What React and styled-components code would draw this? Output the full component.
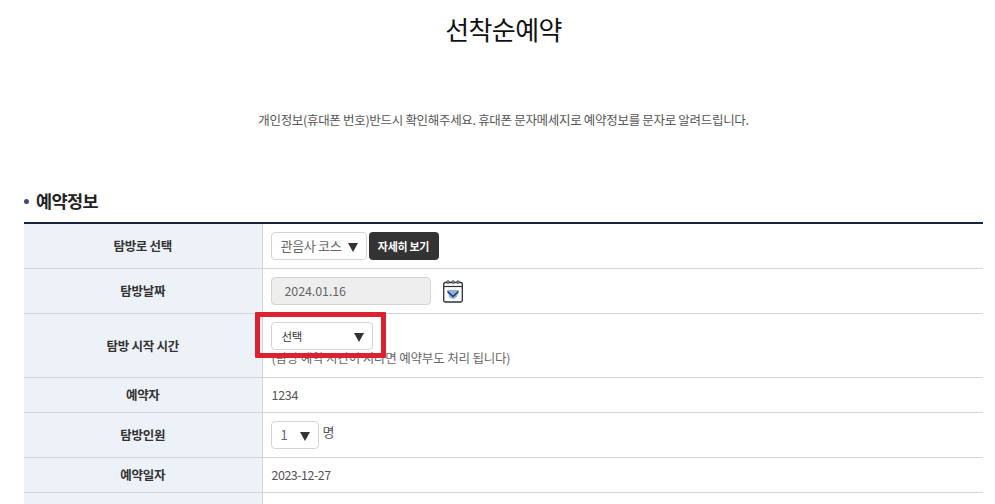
import React from "react";
import styled, { createGlobalStyle } from "styled-components";

const GlobalStyle = createGlobalStyle`
  html, body {
    margin: 0;
    height: 504px;
    overflow: hidden;
    background: #fff;
    font-family: "Noto Sans CJK KR", "Noto Sans", sans-serif;
  }
`;

const Page = styled.div`
  width: 995px;
  box-sizing: border-box;
  padding: 0 12px 0 24px;
`;

const Title = styled.h1`
  margin: 0;
  padding-top: 10px;
  height: 42px;
  text-align: center;
  font-size: 26px;
  line-height: 38px;
  font-weight: 400;
  letter-spacing: -0.6px;
  color: #111;
`;

const Notice = styled.p`
  margin: 56px 0 0;
  height: 24px;
  text-align: center;
  font-size: 12.5px;
  line-height: 24px;
  letter-spacing: -0.31px;
  color: #555;
`;

const SectionTitle = styled.h2`
  margin: 53px 0 0;
  height: 30px;
  display: flex;
  align-items: center;
  gap: 7px;
  font-size: 17.5px;
  font-weight: 700;
  letter-spacing: -0.6px;
  color: #222;

  &::before {
    content: "";
    width: 5px;
    height: 5px;
    margin-top: 3px;
    border-radius: 50%;
    background: #3f4a85;
  }
`;

const InfoTable = styled.table`
  width: 959px;
  margin-top: 7px;
  border-collapse: collapse;
  table-layout: fixed;
  border-top: 2px solid #1c2340;
`;

const Row = styled.tr`
  height: ${(p) => p.$height}px;
  border-bottom: 1px solid #d4d4d8;
`;

const Label = styled.th`
  width: 238px;
  padding: 0;
  box-sizing: border-box;
  background: #edf1f8;
  border-right: 1px solid #d4d4d8;
  text-align: center;
  font-size: 12.5px;
  font-weight: 700;
  letter-spacing: -0.3px;
  color: #333;
`;

const Cell = styled.td`
  padding: 0 8px 0 9px;
  font-size: 12.5px;
  letter-spacing: ${(p) => p.$spacing || -0.3}px;
  color: #555;
  vertical-align: middle;
`;

const Inline = styled.div`
  display: flex;
  align-items: center;
  gap: ${(p) => p.$gap || 2}px;
  margin-left: -1px;
`;

const Select = styled.div`
  position: relative;
  box-sizing: border-box;
  width: ${(p) => p.$width}px;
  height: 28px;
  padding-left: ${(p) => p.$pad || 9}px;
  display: flex;
  align-items: center;
  background: #fff;
  border: 1px solid #d4d4d8;
  border-radius: 4px;
  font-size: ${(p) => p.$size || 12}px;
  color: ${(p) => p.$color || "#666"};
`;

const Arrow = styled.span`
  position: absolute;
  right: 8px;
  top: 10px;
  width: 0;
  height: 0;
  border-left: 5.5px solid transparent;
  border-right: 5.5px solid transparent;
  border-top: 9px solid #333;
`;

const DarkButton = styled.button`
  width: 70px;
  height: 28px;
  padding: 0;
  border: 0;
  border-radius: 4px;
  background: #333;
  color: #fff;
  font-family: inherit;
  font-size: 11px;
  font-weight: 700;
  letter-spacing: -0.3px;
`;

const DateInput = styled.div`
  box-sizing: border-box;
  width: 160px;
  height: 28px;
  padding-left: 13px;
  display: flex;
  align-items: center;
  background: #eeeeee;
  border: 1px solid #d4d4d8;
  border-radius: 4px;
  font-size: 12.5px;
  letter-spacing: -0.1px;
  color: #666;
`;

const CalendarButton = styled.span`
  display: flex;
  margin-left: 10px;
`;

const TimeCell = styled.div`
  position: relative;
  margin: -2px 0 1px -1px;
`;

const Hint = styled.div`
  margin-left: 1px;
  line-height: 16px;
  letter-spacing: -0.18px;
  color: #666;
`;

const Highlight = styled.div`
  position: absolute;
  left: -16px;
  top: -10px;
  width: 131px;
  height: 46px;
  box-sizing: border-box;
  border: 5px solid #dc2230;
  border-radius: 1px;
`;

const Unit = styled.span`
  margin-top: -6px;
  font-size: 13px;
`;

function CalendarIcon() {
  return (
    <svg width="20" height="24" viewBox="0 0 20 24" fill="none">
      <rect x="0.7" y="3.5" width="18.6" height="19.5" rx="1.5" fill="#fff" stroke="#2d3138" strokeWidth="1.3" />
      <path d="M0.7 7.5h18.6" stroke="#2d3138" strokeWidth="1.2" />
      <circle cx="5" cy="3" r="1.2" fill="#fff" stroke="#2d3138" />
      <circle cx="10" cy="3" r="1.2" fill="#fff" stroke="#2d3138" />
      <circle cx="15" cy="3" r="1.2" fill="#fff" stroke="#2d3138" />
      <path d="M4 11h12l-2 6.5a4.5 4.5 0 0 1-8 0z" fill="#8fb3e0" />
      <path d="M4.5 12.5l5.5 5 5.5-5" stroke="#24344f" strokeWidth="1.5" />
    </svg>
  );
}

export default function App() {
  return (
    <Page>
      <GlobalStyle />
      <Title>선착순예약</Title>
      <Notice>개인정보(휴대폰 번호)반드시 확인해주세요. 휴대폰 문자메세지로 예약정보를 문자로 알려드립니다.</Notice>
      <SectionTitle>예약정보</SectionTitle>
      <InfoTable>
        <tbody>
          <Row $height={45}>
            <Label>탐방로 선택</Label>
            <Cell>
              <Inline>
                <Select $width={96} $size={13}>
                  관음사 코스
                  <Arrow />
                </Select>
                <DarkButton>자세히 보기</DarkButton>
              </Inline>
            </Cell>
          </Row>
          <Row $height={45}>
            <Label>탐방날짜</Label>
            <Cell>
              <Inline>
                <DateInput>2024.01.16</DateInput>
                <CalendarButton>
                  <CalendarIcon />
                </CalendarButton>
              </Inline>
            </Cell>
          </Row>
          <Row $height={64}>
            <Label>탐방 시작 시간</Label>
            <Cell>
              <TimeCell>
                <Select $width={102} $color="#333" $size={11.5} $pad={10}>
                  선택
                  <Arrow />
                </Select>
                <Hint>(탐방 예약 시간이 지나면 예약부도 처리 됩니다)</Hint>
                <Highlight />
              </TimeCell>
            </Cell>
          </Row>
          <Row $height={35}>
            <Label>예약자</Label>
            <Cell>1234</Cell>
          </Row>
          <Row $height={45}>
            <Label>탐방인원</Label>
            <Cell>
              <Inline $gap={4}>
                <Select $width={48} $size={13}>
                  1
                  <Arrow />
                </Select>
                <Unit>명</Unit>
              </Inline>
            </Cell>
          </Row>
          <Row $height={35}>
            <Label>예약일자</Label>
            <Cell $spacing={-0.5}>2023-12-27</Cell>
          </Row>
          <Row $height={35}>
            <Label />
            <Cell />
          </Row>
        </tbody>
      </InfoTable>
    </Page>
  );
}
